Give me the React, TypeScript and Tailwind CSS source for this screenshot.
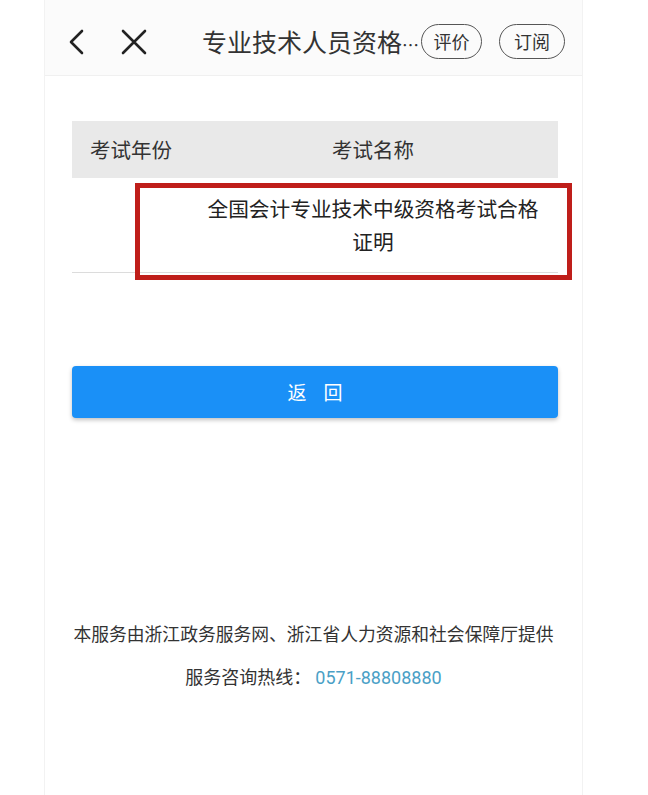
import React from "react";

const font = { fontFamily: '"Noto Sans CJK SC", "Noto Sans", sans-serif' };

const Header = () => (
  <div className="h-[76px] flex items-center border-b border-[#f0f0f0] bg-[#fbfbfb] pl-[23px] pt-[8px]">
    <svg width="16" height="26" viewBox="0 0 16 26" fill="none" stroke="#222" strokeWidth="2.6" strokeLinecap="round" strokeLinejoin="round">
      <path d="M14 2 L3 13 L14 24" />
    </svg>
    <svg className="ml-[37px]" width="26" height="26" viewBox="0 0 26 26" fill="none" stroke="#222" strokeWidth="2.6" strokeLinecap="round">
      <path d="M2 2 L24 24 M24 2 L2 24" />
    </svg>
    <div className="ml-[55px] w-[219px] whitespace-nowrap text-[25px] text-[#333] leading-none">
      专业技术人员资格<span className="text-[17px]">…</span>
    </div>
    <div className="h-[35px] w-[61px] rounded-full border-[1.5px] border-[#555] bg-[#fbfbfb] flex items-center justify-center text-[18px] text-[#333]">
      评价
    </div>
    <div className="ml-[17px] h-[35px] w-[66px] rounded-full border-[1.5px] border-[#555] flex items-center justify-center text-[18px] text-[#333]">
      订阅
    </div>
  </div>
);

export default function App() {
  return (
    <div className="w-[648px] h-[795px] bg-white overflow-hidden" style={font}>
      <div className="ml-[44px] w-[539px] h-full border-x border-[#f2f2f2]">
        <Header />

        <div className="relative mt-[45px] ml-[27px] w-[486px]">
          <div className="h-[57px] flex items-center bg-[#e9e9e9] text-[20.5px] text-[#333]">
            <div className="w-[116px] pl-[18px]">考试年份</div>
            <div className="flex-1 text-center">考试名称</div>
          </div>
          <div className="flex border-b border-[#dcdcdc] py-[14px] text-[20.7px] text-[#222]">
            <div className="w-[116px]" />
            <div className="flex-1 text-center leading-[33px]">
              全国会计专业技术中级资格考试合格
              <br />
              证明
            </div>
          </div>
          <div className="absolute left-[63px] top-[62px] w-[437px] h-[97px] border-[5px] border-[#bf1e1a]" />
        </div>

        <div className="mt-[93px] ml-[27px] w-[486px] h-[52px] rounded-[4px] bg-[#1a90f7] shadow-[0_2px_4px_rgba(0,0,0,0.25)] flex items-center justify-center gap-[17px] text-[19px] text-white">
          <span>返</span>
          <span>回</span>
        </div>

        <div className="mt-[203px] text-center text-[17.8px] text-[#333] leading-[24px]">
          本服务由浙江政务服务网、浙江省人力资源和社会保障厅提供
        </div>
        <div className="mt-[19px] text-center text-[18px] text-[#333] leading-[24px]">
          服务咨询热线：
          <span className="ml-[4px] text-[#4a9fc6]" style={{ fontFamily: 'Roboto, "Noto Sans CJK SC", sans-serif' }}>
            0571-88808880
          </span>
        </div>
      </div>
    </div>
  );
}
